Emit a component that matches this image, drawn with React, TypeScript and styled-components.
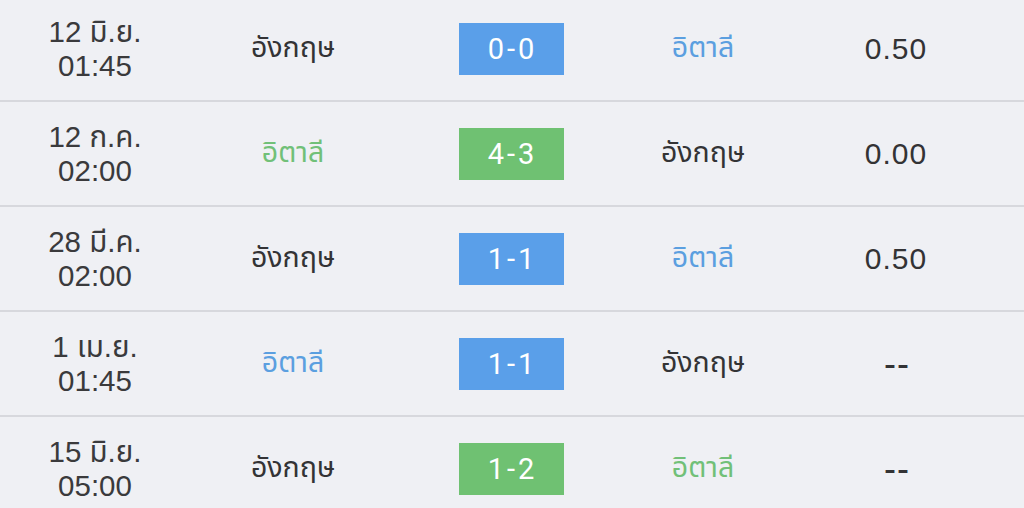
import React from "react";
import styled, { createGlobalStyle } from "styled-components";

const Global = createGlobalStyle`
  html, body { margin: 0; padding: 0; background: #eff0f4; overflow: hidden; }
  body { font-family: "Helvetica Neue", "Liberation Sans", "Noto Sans Thai", "Noto Sans", sans-serif; }
`;

const List = styled.div`
  margin-top: -3px;
  width: 1024px;
  background: #eff0f4;
`;

const Row = styled.div`
  display: grid;
  grid-template-columns: 190px 206px 230px 154px 232px 12px;
  align-items: center;
  height: 103px;
  border-bottom: 2px solid #d7d8dd;
  &:last-child { border-bottom: none; }
`;

const DateCell = styled.div`
  text-align: center;
  color: #3a3a3c;
  font-size: 29.5px;
  line-height: 34px;
`;

type Tone = "dark" | "blue" | "green";
const toneColor: Record<Tone, string> = {
  dark: "#333335",
  blue: "#5b9fe0",
  green: "#71c078",
};

const Team = styled.div<{ $tone: Tone }>`
  text-align: center;
  font-size: 28.5px;
  color: ${(p) => toneColor[p.$tone]};
`;

const ScoreCell = styled.div`
  display: flex;
  justify-content: center;
`;

const ScoreBox = styled.div<{ $tone: "blue" | "green" }>`
  width: 105px;
  height: 52px;
  display: flex;
  align-items: center;
  justify-content: center;
  background: ${(p) => (p.$tone === "blue" ? "#5a9fe9" : "#6fc172")};
  color: #ffffff;
  font-family: Roboto, "Liberation Sans", sans-serif;
  font-size: 29px;
  letter-spacing: 3px;
  padding-left: 3px;
  box-sizing: border-box;
`;

const Odds = styled.div<{ $empty?: boolean }>`
  text-align: center;
  color: #333335;
  font-size: ${(p) => (p.$empty ? "36px" : "30px")};
  letter-spacing: ${(p) => (p.$empty ? "1px" : "1px")};
  padding-left: ${(p) => (p.$empty ? "2px" : "0")};
`;

type Match = {
  day: string;
  time: string;
  home: string;
  homeTone: Tone;
  score: string;
  scoreTone: "blue" | "green";
  away: string;
  awayTone: Tone;
  odds: string;
};

const matches: Match[] = [
  { day: "12 มิ.ย.", time: "01:45", home: "อังกฤษ", homeTone: "dark", score: "0-0", scoreTone: "blue", away: "อิตาลี", awayTone: "blue", odds: "0.50" },
  { day: "12 ก.ค.", time: "02:00", home: "อิตาลี", homeTone: "green", score: "4-3", scoreTone: "green", away: "อังกฤษ", awayTone: "dark", odds: "0.00" },
  { day: "28 มี.ค.", time: "02:00", home: "อังกฤษ", homeTone: "dark", score: "1-1", scoreTone: "blue", away: "อิตาลี", awayTone: "blue", odds: "0.50" },
  { day: "1 เม.ย.", time: "01:45", home: "อิตาลี", homeTone: "blue", score: "1-1", scoreTone: "blue", away: "อังกฤษ", awayTone: "dark", odds: "--" },
  { day: "15 มิ.ย.", time: "05:00", home: "อังกฤษ", homeTone: "dark", score: "1-2", scoreTone: "green", away: "อิตาลี", awayTone: "green", odds: "--" },
];

export default function App() {
  return (
    <>
      <Global />
      <List>
        {matches.map((m, i) => (
          <Row key={i}>
            <DateCell>
              <div>{m.day}</div>
              <div>{m.time}</div>
            </DateCell>
            <Team $tone={m.homeTone}>{m.home}</Team>
            <ScoreCell>
              <ScoreBox $tone={m.scoreTone}>{m.score}</ScoreBox>
            </ScoreCell>
            <Team $tone={m.awayTone}>{m.away}</Team>
            <Odds $empty={m.odds === "--"}>{m.odds}</Odds>
            <div />
          </Row>
        ))}
      </List>
    </>
  );
}
